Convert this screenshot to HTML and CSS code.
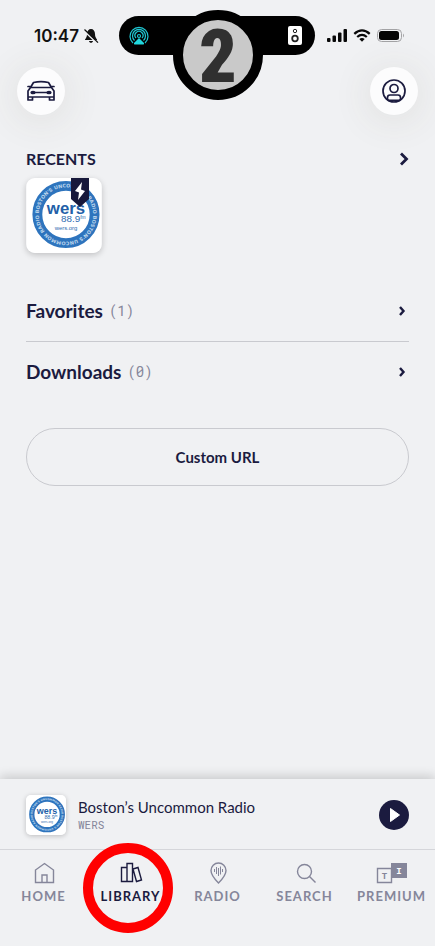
FILE: index.html
```html
<!DOCTYPE html>
<html lang="en">
<head>
<meta charset="utf-8">
<meta name="viewport" content="width=device-width, initial-scale=1">
<title>Library</title>
<link rel="stylesheet" href="styles.css">
</head>
<body>
<svg class="defs" aria-hidden="true">
  <defs>
    <path id="ring" d="M-27.500 0A27.500 27.500 0 0 1 27.500 0A27.500 27.500 0 0 1 -27.500 0"/>
    <symbol id="wers" viewBox="0 0 76 76">
      <rect width="76" height="76" fill="#fff"/>
      <g transform="translate(40 37)">
        <circle r="29" fill="none" stroke="#2e74bd" stroke-width="10"/>
        <text class="ring-text" transform="rotate(2)"><textPath href="#ring">BOSTON'S UNCOMMON RADIO BOSTON'S UNCOMMON RADIO</textPath></text>
        <text class="logo-name" y="-1" text-anchor="middle">wers</text>
        <text class="logo-dial" x="-5" y="8">88.9<tspan class="logo-fm" dy="-3">fm</tspan></text>
        <text class="logo-site" y="16" text-anchor="middle">wers.org</text>
      </g>
    </symbol>
  </defs>
</svg>
<div class="app">
  <header class="status">
    <div class="clock"><span>10:47</span>
      <svg width="16" height="16" viewBox="0 0 16 16"><path d="M8 1C5.600 1 4 3 4 6c0 3-1 4-2 5.400V12h12v-.6C13 10 12 9 12 6c0-3-1.600-5-4-5zM6 13c.2 2.400 3.800 2.400 4 0z" fill="#111"/><path d="M.8 2.600 14 15.300" stroke="#f0f1f3" stroke-width="1.500"/><path d="M1.500 1.500 15 14.600" stroke="#111" stroke-width="1.300"/></svg>
    </div>
    <div class="island">
      <svg width="20" height="20" viewBox="0 0 20 20" fill="none" stroke="#20c7d2" stroke-width="1.200"><path d="M4 17A9 9 0 1 1 16 17M5.500 14.500a6.500 6.500 0 1 1 9 0M7 12a4 4 0 1 1 6 0"/><circle cx="10" cy="10" r="1.500"/><path d="m10 12 5 5q.5 1.500-1 1.500H6Q4.500 18.500 5 17z" fill="#20d8de" stroke="none"/></svg>
      <svg width="14" height="19" viewBox="0 0 14 19"><rect width="14" height="19" rx="2" fill="#fff"/><g fill="none" stroke="#222"><circle cx="7" cy="5" r="1.700"/><circle cx="7" cy="12.500" r="2.800" stroke-width="1.800"/></g></svg>
      <div class="step">2</div>
    </div>
    <div class="signals">
      <svg width="20" height="13" viewBox="0 0 20 13"><g fill="#080808"><rect y="9" width="3.500" height="4" rx="1"/><rect x="5.500" y="6.500" width="3.500" height="6.500" rx="1"/><rect x="11" y="3.500" width="3.500" height="9.500" rx="1"/><rect x="16.500" width="3.500" height="13" rx="1"/></g></svg>
      <svg width="18" height="13" viewBox="0 0 18 13" fill="none" stroke="#080808" stroke-width="2.300"><path d="M1.300 4.800Q9-2 16.700 4.800M4.200 8Q9 3.800 13.800 8"/><path d="M6.300 10.100Q9 8 11.700 10.100L9 12.800z" fill="#080808" stroke="none"/></svg>
      <svg width="28" height="13" viewBox="0 0 28 13"><rect x=".5" y=".5" width="24" height="12" rx="4" fill="none" stroke="#a3a3a5"/><rect x="2" y="2" width="20" height="9" rx="2.500" fill="#050505"/><path d="M26 4.500q2 2 0 4z" fill="#a3a3a5"/></svg>
    </div>
  </header>
  <div class="actions">
    <button class="round" aria-label="Car mode"><svg width="30" height="24" viewBox="0 0 30 24" fill="none" stroke="#1b1b3f" stroke-width="1.700" stroke-linejoin="round" stroke-linecap="round"><path d="m4.500 8.500 3-5Q15 1.600 22.500 3.500l3 5M4.500 8.500h21L28 12v9h-4.500v-3h-17v3H2v-9zM2 7.500h2M26 7.500h2M2 18h26M9 13.500h12"/><ellipse cx="7" cy="13.500" rx="1.800" ry="1" fill="#1b1b3f"/><ellipse cx="23" cy="13.500" rx="1.800" ry="1" fill="#1b1b3f"/></svg></button>
    <button class="round" aria-label="Profile"><svg width="24" height="24" viewBox="0 0 24 24" fill="none" stroke="#1b1b3f" stroke-width="1.700"><circle cx="12" cy="12" r="11"/><circle cx="12" cy="9.500" r="4"/><path d="M5.500 20.500v-2q0-2.500 2.500-2.500h8q2.500 0 2.500 2.500v2M6 21.300h12"/></svg></button>
  </div>
  <main>
    <section>
      <a class="row recents" href="#"><h2>RECENTS</h2><svg width="10" height="14" viewBox="0 0 10 14"><path d="m2 1.500 5.500 5.500L2 12.500" fill="none" stroke="#1b1b3f" stroke-width="2.800"/></svg></a>
      <a class="cover" href="#" aria-label="WERS 88.9">
        <svg class="art"><use href="#wers"/></svg>
        <svg class="ribbon" width="18" height="29" viewBox="0 0 18 29"><path d="M0 0h18v21l-9 8-9-8z" fill="#17183b"/><path d="m11 4-7 9 4 1.500L7 22l7-9-4-1.500z" fill="#fff"/></svg>
      </a>
    </section>
    <nav class="lists" aria-label="Collections">
      <a class="row item" href="#"><span class="label">Favorites <small>(1)</small></span><svg width="8" height="10" viewBox="0 0 8 10"><path d="m2 1 3.500 4L2 9" fill="none" stroke="#1b1b3f" stroke-width="2.400"/></svg></a>
      <a class="row item" href="#"><span class="label">Downloads <small>(0)</small></span><svg width="8" height="10" viewBox="0 0 8 10"><path d="m2 1 3.500 4L2 9" fill="none" stroke="#1b1b3f" stroke-width="2.400"/></svg></a>
    </nav>
    <button class="custom">Custom URL</button>
  </main>
  <footer>
    <div class="player">
      <svg class="mini"><use href="#wers"/></svg>
      <div class="track"><div class="title">Boston’s Uncommon Radio</div><div class="station">WERS</div></div>
      <button class="play" aria-label="Play"><svg width="30" height="30" viewBox="0 0 30 30"><path d="m11.500 8.500 9 6.500-9 6.500z" fill="#fff" stroke="#fff" stroke-linejoin="round"/></svg></button>
    </div>
    <nav class="tabs" aria-label="Main">
      <a href="#"><svg width="32" height="22" viewBox="0 0 32 22"><path d="M7.500 20.500V8L16.500 1.500 25.500 8v12.500zM14 20v-7h5v7"/></svg>HOME</a>
      <a href="#" class="current" aria-current="page"><svg width="32" height="22" viewBox="0 0 32 22"><path d="M6.500 5.500h5.500v14H6.500zM12 1.500h5.500v18H12zM18 7l5-1.500 3.500 12.500-5 1.500z"/></svg>LIBRARY</a>
      <a href="#"><svg width="32" height="22" viewBox="0 0 32 22"><path d="M16.500 21Q9 13.500 9 8.500a7.500 7.500 0 0 1 15 0q0 5-7.500 12.500z"/><path d="M12.500 7v3M14.500 5v7M16.500 6v8M18.500 4.500v8M20.500 7v3" stroke-width="1"/></svg>RADIO</a>
      <a href="#"><svg width="32" height="22" viewBox="0 0 32 22"><circle cx="15.500" cy="9.500" r="7"/><path d="m20.500 14.500 6 6"/></svg>SEARCH</a>
      <a href="#"><svg width="32" height="22" viewBox="0 0 32 22"><path d="M1.500 6.500h14v14h-14z"/><path d="M15 1h16v15H15z" fill="#85869a" stroke="none"/><text class="ti" x="8.500" y="17" fill="#85869a">T</text><text class="ti" x="23" y="12" fill="#fff">I</text></svg>PREMIUM</a>
    </nav>
    <div class="marker"></div>
  </footer>
</div>
</body>
</html>
```
FILE: styles.css
```css
* { box-sizing: border-box; }
body { margin: 0; background: #f0f1f3; color: #1b1b3f; font-family: Lato, sans-serif; }
a { color: inherit; text-decoration: none; }
button { padding: 0; border: 0; font: inherit; color: inherit; }
svg { display: block; flex-shrink: 0; }
.defs { position: absolute; width: 0; height: 0; }
.app { min-height: 100vh; display: flex; flex-direction: column; }

.status { display: grid; grid-template-columns: 1fr 196px 1fr; padding: 16px 1px 0 0; height: 67px; }
.clock { display: flex; align-items: center; justify-content: flex-end; gap: 4px; height: 40px; padding-right: 20px; font: 600 17px Inter, sans-serif; color: #111; }
.island { position: relative; z-index: 2; display: flex; align-items: center; justify-content: space-between; height: 39px; padding: 0 13px 0 10px; background: #000; border-radius: 20px; }
.step { position: absolute; left: 54px; top: -6px; width: 90px; height: 90px; border: 10px solid #000; border-radius: 50%; background: #c9c9c9; color: #303030; font: 900 74px/74px Impact, "Roboto Condensed", "Liberation Sans", sans-serif; text-align: center; }
.signals { display: flex; align-items: center; gap: 6px; height: 39px; padding-left: 12px; }

.actions { display: flex; justify-content: space-between; padding: 0 17px; }
.round { width: 48px; height: 48px; display: grid; place-items: center; border-radius: 50%; background: #fcfcfd; box-shadow: 0 4px 40px rgba(80, 70, 50, .12); }

main { flex: 1; padding: 32px 26px; }
.row { display: flex; align-items: center; justify-content: space-between; }
.recents { height: 24px; }
h2 { margin: 0; font-size: 16px; line-height: 24px; font-weight: 700; }
.cover { position: relative; display: block; width: 76px; margin-top: 7px; }
.art { width: 76px; height: 75px; border-radius: 9px; box-shadow: 0 2px 6px rgba(0, 0, 0, .2); }
.ribbon { position: absolute; top: 0; right: 13px; }
.ring-text { font: 700 5px "DejaVu Sans", sans-serif; fill: #bcd5ec; }
.logo-name { font: 700 17px "Liberation Sans", sans-serif; fill: #235fa8; }
.logo-dial { font: 10px "Liberation Sans", sans-serif; fill: #2e6db1; }
.logo-fm { font-size: 5px; }
.logo-site { font: 6px "Liberation Sans", sans-serif; fill: #2e6db1; }

.lists { margin-top: 28px; }
.item { height: 60px; padding-right: 3px; }
.item + .item { height: 61px; border-top: 1px solid #c9cacf; }
.label { display: flex; align-items: center; gap: 6px; font-size: 19px; line-height: 24px; font-weight: 700; }
.label small { font: 14px/24px "Roboto Mono", "DejaVu Sans Mono", monospace; color: #85869a; }
.custom { width: 100%; height: 58px; margin-top: 26px; border: 1px solid #c9cacf; border-radius: 29px; background: none; font-size: 15px; font-weight: 700; }

footer { position: relative; box-shadow: 0 -3px 10px rgba(0, 0, 0, .16); background: #f0f1f3; }
.player { display: flex; align-items: center; height: 71px; padding: 2px 26px 0; gap: 12px; border-bottom: 1px solid #d5d6da; }
.mini { width: 40px; height: 40px; border-radius: 5px; box-shadow: 0 1px 5px rgba(0, 0, 0, .22); }
.track { flex: 1; }
.title { font-size: 15px; line-height: 20px; }
.station { font: 11px/16px "Roboto Mono", "DejaVu Sans Mono", monospace; color: #85869a; }
.play { width: 30px; height: 30px; border-radius: 50%; background: #1b1b3f; }
.tabs { display: grid; grid-template-columns: repeat(5, 1fr); height: 96px; padding-top: 12px; }
.tabs a { display: flex; flex-direction: column; align-items: center; gap: 3px; color: #85869a; font-size: 13px; line-height: 18px; font-weight: 700; letter-spacing: 1px; }
.tabs .current { color: #1b1b3f; }
.tabs svg { fill: none; stroke: currentColor; stroke-width: 1.4px; }
.ti { font: 700 9px "Liberation Mono", monospace; text-anchor: middle; stroke: none; letter-spacing: 0; }
.marker { position: absolute; left: calc(30% - 48px); bottom: 13px; width: 90px; height: 90px; border: 10px solid #f00; border-radius: 50%; pointer-events: none; }
```
